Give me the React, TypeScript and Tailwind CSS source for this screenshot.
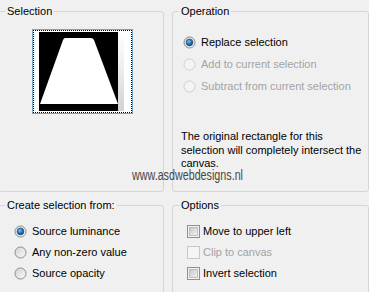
type RadioProps = { checked?: boolean; disabled?: boolean };

function RadioMark({ checked, disabled }: RadioProps) {
  if (disabled) {
    return (
      <svg width="13" height="13" viewBox="0 0 13 13" className="shrink-0">
        <circle cx="6.5" cy="6.5" r="5.5" fill="#f4f4f4" stroke="#cfcfcf" />
      </svg>
    );
  }
  return (
    <svg width="13" height="13" viewBox="0 0 13 13" className="shrink-0">
      <defs>
        <linearGradient id="rg-off" x1="0" y1="0" x2="1" y2="1">
          <stop offset="0" stopColor="#d2d2d2" />
          <stop offset="1" stopColor="#fafafa" />
        </linearGradient>
        <radialGradient id="rg-dot" cx="0.4" cy="0.35" r="0.7">
          <stop offset="0" stopColor="#7cc4f5" />
          <stop offset="0.5" stopColor="#2c79b8" />
          <stop offset="1" stopColor="#0e3f6e" />
        </radialGradient>
      </defs>
      <circle cx="6.5" cy="6.5" r="5.5" fill="url(#rg-off)" stroke="#8a8b8c" />
      {checked && <circle cx="6.5" cy="6.5" r="3.4" fill="url(#rg-dot)" stroke="#1c4b7a" strokeWidth="0.6" />}
    </svg>
  );
}

function CheckMark({ disabled }: { disabled?: boolean }) {
  if (disabled) {
    return (
      <svg width="13" height="13" viewBox="0 0 13 13" className="shrink-0">
        <rect x="0.5" y="0.5" width="12" height="12" fill="#f5f5f5" stroke="#c8c8c8" />
      </svg>
    );
  }
  return (
    <svg width="13" height="13" viewBox="0 0 13 13" className="shrink-0">
      <defs>
        <linearGradient id="cb-in" x1="0" y1="0" x2="1" y2="1">
          <stop offset="0" stopColor="#c6c6c6" />
          <stop offset="1" stopColor="#f4f4f4" />
        </linearGradient>
      </defs>
      <rect x="0.5" y="0.5" width="12" height="12" fill="#f4f4f4" stroke="#8e8f8f" />
      <rect x="2.5" y="2.5" width="8" height="8" fill="url(#cb-in)" stroke="#b4b4b4" strokeWidth="0.8" />
    </svg>
  );
}

function Group({ title, className, children }: { title: string; className: string; children: React.ReactNode }) {
  return (
    <fieldset className={`border border-[#d5d5d5] rounded-[3px] p-0 ${className}`}>
      <legend className="ml-[6px] px-[2px] leading-[13px]">{title}</legend>
      {children}
    </fieldset>
  );
}

function Preview() {
  return (
    <div className="ml-[33px] mt-[11px] w-[101px] h-[85px] border border-[#6fa5c8] bg-white">
      <div className="w-full h-full border border-dotted border-black pl-[5px] pt-[1px]">
        <svg width="86" height="79" viewBox="0 0 86 79">
          <defs>
            <linearGradient id="strip" x1="0" y1="0" x2="0" y2="1">
              <stop offset="0" stopColor="#ffffff" />
              <stop offset="0.4" stopColor="#f0f0f0" />
              <stop offset="1" stopColor="#d2d2d2" />
            </linearGradient>
          </defs>
          <rect x="0" y="0" width="79" height="79" fill="#000" />
          <path d="M26 6 L52 6 Q54 6 55 8 L79 72 L1 72 L24 8 Q25 6 26 6 Z" fill="#fff" />
          <rect x="79" y="0" width="6" height="79" fill="url(#strip)" />
        </svg>
      </div>
    </div>
  );
}

function RadioRow({ label, checked, disabled, h }: RadioProps & { label: string; h: string }) {
  return (
    <div className={`flex items-center gap-[5px] ${h} ${disabled ? 'text-[#a3a3a3]' : 'text-black'}`}>
      <RadioMark checked={checked} disabled={disabled} />
      <span>{label}</span>
    </div>
  );
}

function CheckRow({ label, disabled }: { label: string; disabled?: boolean }) {
  return (
    <div className={`flex items-center gap-[3px] h-[21px] ${disabled ? 'text-[#a3a3a3]' : 'text-black'}`}>
      <CheckMark disabled={disabled} />
      <span>{label}</span>
    </div>
  );
}

// watermark stamped over the dialog
function Watermark() {
  return (
    <svg width="120" height="18" className="absolute left-[132px] top-[168px] overflow-visible">
      <text
        x="0"
        y="12"
        fontSize="14"
        fill="#474747"
        textLength="111"
        lengthAdjust="spacingAndGlyphs"
        fontFamily="Liberation Sans, Arial, sans-serif"
      >
        www.asdwebdesigns.nl
      </text>
    </svg>
  );
}

export default function App() {
  return (
    <div
      className="relative w-[369px] h-[292px] overflow-hidden bg-[#f0f0f0] text-[11px] text-black"
      style={{ fontFamily: '"Liberation Sans", Arial, sans-serif' }}
    >
      <div className="flex pt-[5px] -ml-[2px]">
        <Group title="Selection" className="w-[166px] h-[187px]">
          <Preview />
        </Group>
        <Group title="Operation" className="ml-[8px] w-[197px] h-[187px]">
          <div className="pl-[10px] mt-[13px]">
            <RadioRow h="h-[22px]" label="Replace selection" checked />
            <RadioRow h="h-[22px]" label="Add to current selection" disabled />
            <RadioRow h="h-[22px]" label="Subtract from current selection" disabled />
          </div>
          <p className="pl-[8px] mt-[33px] leading-[13.5px]">
            The original rectangle for this
            <br />
            selection will completely intersect the
            <br />
            canvas.
          </p>
        </Group>
      </div>
      <div className="flex mt-[7px] -ml-[2px]">
        <Group title="Create selection from:" className="w-[166px] h-[110px]">
          <div className="pl-[15px] mt-[9px]">
            <RadioRow h="h-[21px]" label="Source luminance" checked />
            <RadioRow h="h-[21px]" label="Any non-zero value" />
            <RadioRow h="h-[21px]" label="Source opacity" />
          </div>
        </Group>
        <Group title="Options" className="ml-[8px] w-[197px] h-[110px]">
          <div className="pl-[14px] mt-[9px]">
            <CheckRow label="Move to upper left" />
            <CheckRow label="Clip to canvas" disabled />
            <CheckRow label="Invert selection" />
          </div>
        </Group>
      </div>
      <Watermark />
    </div>
  );
}
